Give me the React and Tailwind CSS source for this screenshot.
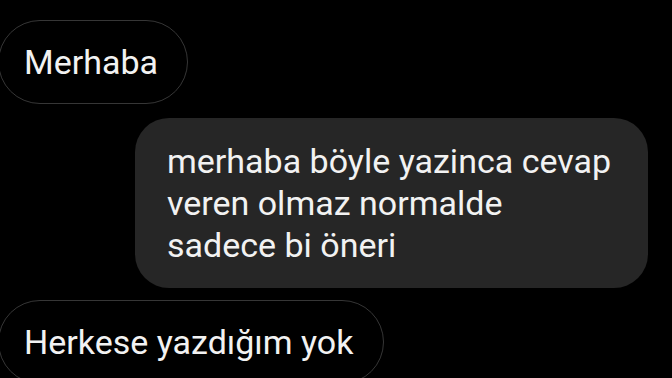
export default function App() {
  return (
    <div className="w-[672px] h-[378px] bg-black overflow-hidden flex flex-col" style={{ fontFamily: 'Roboto, "Noto Sans", sans-serif' }}>
      <div className="mt-[20px] ml-[-2px] self-start h-[84px] shrink-0 rounded-full border border-[#363636] pl-[25px] pr-[29px] flex items-center text-[34px] text-[#f2f2f2] whitespace-nowrap">
        Merhaba
      </div>
      <div className="mt-[14px] ml-[135px] w-[513px] h-[170px] shrink-0 rounded-[34px] bg-[#262626] pl-[32px] pr-[20px] flex flex-col justify-center text-[34px] leading-[42px] text-[#f2f2f2] whitespace-nowrap">
        <div>merhaba böyle yazinca cevap</div>
        <div>veren olmaz normalde</div>
        <div>sadece bi öneri</div>
      </div>
      <div className="mt-[12px] ml-[-2px] self-start h-[84px] shrink-0 rounded-full border border-[#363636] pl-[25px] pr-[29px] flex items-center text-[34px] text-[#f2f2f2] whitespace-nowrap">
        Herkese yazdığım yok
      </div>
    </div>
  );
}
